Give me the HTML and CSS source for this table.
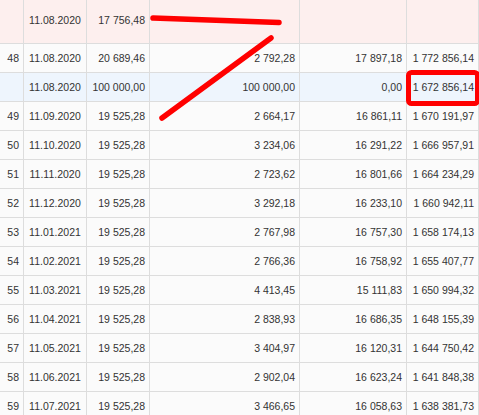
FILE: index.html
```html
<!DOCTYPE html>
<html>
<head>
<meta charset="utf-8">
<link rel="stylesheet" href="styles.css">
</head>
<body>
<div class="wrap">
<table class="grid">
<colgroup>
<col class="c1"><col class="c2"><col class="c3"><col class="c4"><col class="c5"><col class="c6">
</colgroup>
<tbody>
<tr class="top"><td class="num"></td><td class="date">11.08.2020</td><td class="num">17 756,48</td><td class="num"></td><td class="num"></td><td class="num"></td></tr>
<tr><td class="num">48</td><td class="date">11.08.2020</td><td class="num">20 689,46</td><td class="num">2 792,28</td><td class="num">17 897,18</td><td class="num">1 772 856,14</td></tr>
<tr class="hl"><td class="num"></td><td class="date">11.08.2020</td><td class="num">100 000,00</td><td class="num">100 000,00</td><td class="num">0,00</td><td class="num">1 672 856,14</td></tr>
<tr><td class="num">49</td><td class="date">11.09.2020</td><td class="num">19 525,28</td><td class="num">2 664,17</td><td class="num">16 861,11</td><td class="num">1 670 191,97</td></tr>
<tr><td class="num">50</td><td class="date">11.10.2020</td><td class="num">19 525,28</td><td class="num">3 234,06</td><td class="num">16 291,22</td><td class="num">1 666 957,91</td></tr>
<tr><td class="num">51</td><td class="date">11.11.2020</td><td class="num">19 525,28</td><td class="num">2 723,62</td><td class="num">16 801,66</td><td class="num">1 664 234,29</td></tr>
<tr><td class="num">52</td><td class="date">11.12.2020</td><td class="num">19 525,28</td><td class="num">3 292,18</td><td class="num">16 233,10</td><td class="num">1 660 942,11</td></tr>
<tr><td class="num">53</td><td class="date">11.01.2021</td><td class="num">19 525,28</td><td class="num">2 767,98</td><td class="num">16 757,30</td><td class="num">1 658 174,13</td></tr>
<tr><td class="num">54</td><td class="date">11.02.2021</td><td class="num">19 525,28</td><td class="num">2 766,36</td><td class="num">16 758,92</td><td class="num">1 655 407,77</td></tr>
<tr><td class="num">55</td><td class="date">11.03.2021</td><td class="num">19 525,28</td><td class="num">4 413,45</td><td class="num">15 111,83</td><td class="num">1 650 994,32</td></tr>
<tr><td class="num">56</td><td class="date">11.04.2021</td><td class="num">19 525,28</td><td class="num">2 838,93</td><td class="num">16 686,35</td><td class="num">1 648 155,39</td></tr>
<tr><td class="num">57</td><td class="date">11.05.2021</td><td class="num">19 525,28</td><td class="num">3 404,97</td><td class="num">16 120,31</td><td class="num">1 644 750,42</td></tr>
<tr><td class="num">58</td><td class="date">11.06.2021</td><td class="num">19 525,28</td><td class="num">2 902,04</td><td class="num">16 623,24</td><td class="num">1 641 848,38</td></tr>
<tr><td class="num">59</td><td class="date">11.07.2021</td><td class="num">19 525,28</td><td class="num">3 466,65</td><td class="num">16 058,63</td><td class="num">1 638 381,73</td></tr>
</tbody>
</table>
<svg class="marks" width="479" height="415" viewBox="0 0 479 415">
<path d="M153 18 L 279 22.5" stroke="#ff0000" stroke-width="5.5" stroke-linecap="round" fill="none"/>
<path d="M162 118 L 271 38" stroke="#ff0000" stroke-width="5.5" stroke-linecap="round" fill="none"/>
<rect x="408.5" y="72.5" width="69" height="31" rx="3" stroke="#ff0000" stroke-width="5" fill="none"/>
</svg>
</div>
</body>
</html>
```
FILE: styles.css
```css
html, body {
  margin: 0;
  padding: 0;
  background: #ffffff;
  overflow: hidden;
}
.wrap {
  position: relative;
  width: 479px;
  height: 415px;
  overflow: hidden;
}
.grid {
  border-collapse: separate;
  border-spacing: 0;
  table-layout: fixed;
  width: 479px;
  font-family: "Liberation Sans", Arial, sans-serif;
  font-size: 10.5px;
  color: #333333;
}
.c1 { width: 24px; }
.c2 { width: 63px; }
.c3 { width: 63px; }
.c4 { width: 150px; }
.c5 { width: 107px; }
.c6 { width: 72px; }
.grid td {
  height: 29px;
  padding: 0 4px 0 4px;
  border-right: 1px solid #dddddd;
  border-bottom: 1px solid #dddddd;
  background: #fbfbfb;
  white-space: nowrap;
  overflow: hidden;
  vertical-align: middle;
  box-sizing: border-box;
}
.grid td.num { text-align: right; }
.grid td.date { text-align: center; padding: 0; }
.grid tr.top td {
  height: 44px;
  padding-bottom: 4px;
  background: #fdefee;
}
.grid tr.hl td { background: #eef5fd; }
.marks {
  position: absolute;
  left: 0;
  top: 0;
  pointer-events: none;
}
```
